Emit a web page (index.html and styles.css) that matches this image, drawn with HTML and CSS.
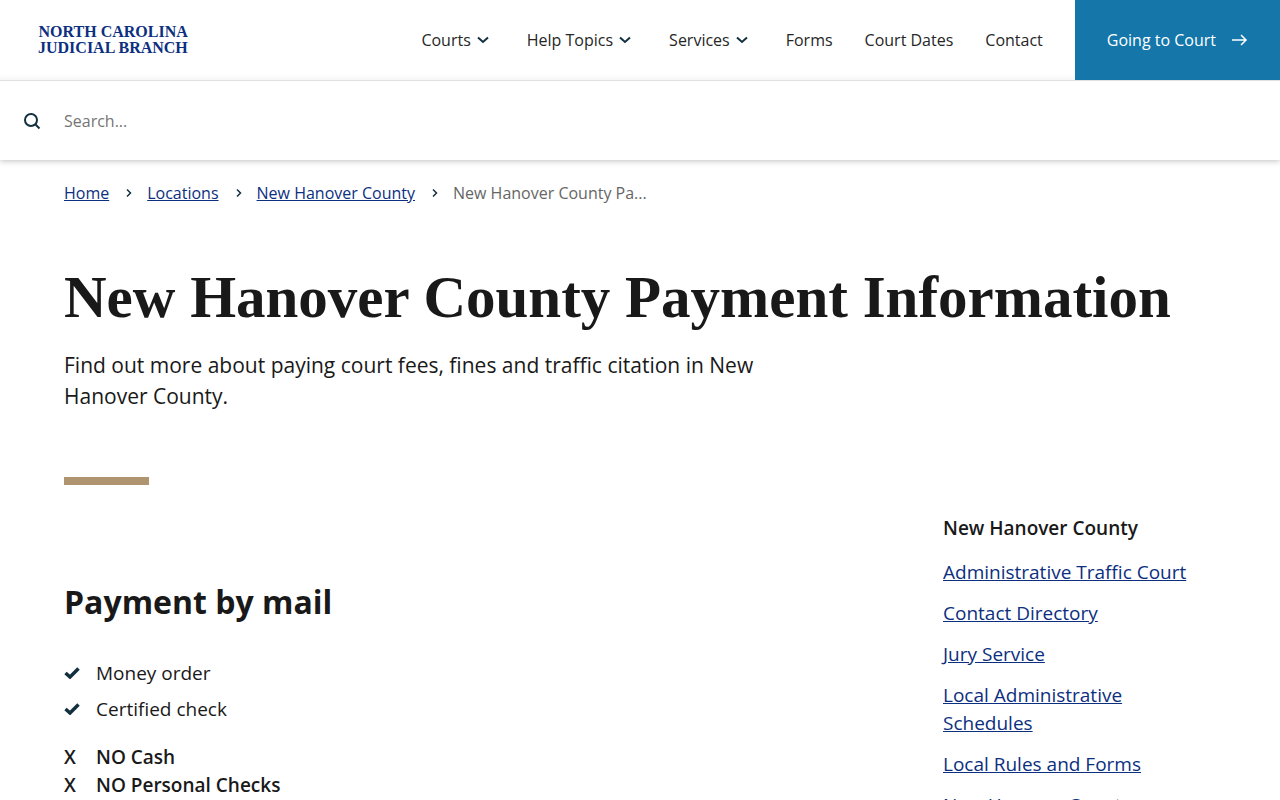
FILE: index.html
```html
<!DOCTYPE html>
<html lang="en">
<head>
<meta charset="utf-8">
<meta name="viewport" content="width=device-width, initial-scale=1">
<title>New Hanover County Payment Information</title>
<link rel="stylesheet" href="styles.css">
</head>
<body>
<header class="site-header">
  <div class="topbar">
    <a class="logo" href="#">NORTH CAROLINA<br>JUDICIAL BRANCH</a>
    <nav class="main-nav" aria-label="Main">
      <button class="nav-item" type="button">Courts <svg class="chevron" viewBox="0 0 12 8" aria-hidden="true"><path d="M1 1.500 6 6l5-4.500"/></svg></button>
      <button class="nav-item" type="button">Help Topics <svg class="chevron" viewBox="0 0 12 8" aria-hidden="true"><path d="M1 1.500 6 6l5-4.500"/></svg></button>
      <button class="nav-item" type="button">Services <svg class="chevron" viewBox="0 0 12 8" aria-hidden="true"><path d="M1 1.500 6 6l5-4.500"/></svg></button>
      <a class="nav-item" href="#">Forms</a>
      <a class="nav-item" href="#">Court Dates</a>
      <a class="nav-item" href="#">Contact</a>
    </nav>
    <a class="cta" href="#">Going to Court <svg class="arrow" viewBox="0 0 16 12" aria-hidden="true"><path d="M0 6h14M9 1l5 5-5 5"/></svg></a>
  </div>
  <form class="search" role="search">
    <button class="search-button" type="button" aria-label="Search"><svg class="search-icon" viewBox="0 0 16 16" aria-hidden="true"><circle cx="7" cy="7" r="6"/><path d="m11.500 11.500 4 4"/></svg></button>
    <input class="search-input" type="text" placeholder="Search..." aria-label="Search">
  </form>
</header>
<main class="page">
  <nav class="breadcrumbs" aria-label="Breadcrumb">
    <a href="#">Home</a>
    <svg class="crumb-sep" viewBox="0 0 6 8" aria-hidden="true"><path d="m2 .5 3.500 3.500L2 7.500"/></svg>
    <a href="#">Locations</a>
    <svg class="crumb-sep" viewBox="0 0 6 8" aria-hidden="true"><path d="m2 .5 3.500 3.500L2 7.500"/></svg>
    <a href="#">New Hanover County</a>
    <svg class="crumb-sep" viewBox="0 0 6 8" aria-hidden="true"><path d="m2 .5 3.500 3.500L2 7.500"/></svg>
    <span class="current">New Hanover County Pa...</span>
  </nav>
  <h1 class="title">New Hanover County Payment Information</h1>
  <p class="lead">Find out more about paying court fees, fines and traffic citation in New Hanover County.</p>
  <div class="rule"></div>
  <div class="columns">
    <section class="content">
      <h2 class="section-title">Payment by mail</h2>
      <ul class="accepted">
        <li><svg class="check" viewBox="0 0 16 12" aria-hidden="true"><path d="m1.500 6 4.500 4 8.500-8.500"/></svg>Money order</li>
        <li><svg class="check" viewBox="0 0 16 12" aria-hidden="true"><path d="m1.500 6 4.500 4 8.500-8.500"/></svg>Certified check</li>
      </ul>
      <ul class="refused">
        <li><span class="cross">X</span>NO Cash</li>
        <li><span class="cross">X</span>NO Personal Checks</li>
      </ul>
    </section>
    <aside class="sidebar">
      <h2 class="sidebar-title">New Hanover County</h2>
      <ul class="sidebar-links">
        <li><a href="#">Administrative Traffic Court</a></li>
        <li><a href="#">Contact Directory</a></li>
        <li><a href="#">Jury Service</a></li>
        <li><a href="#">Local Administrative Schedules</a></li>
        <li><a href="#">Local Rules and Forms</a></li>
        <li><a href="#">New Hanover County</a></li>
      </ul>
    </aside>
  </div>
</main>
</body>
</html>
```
FILE: styles.css
```css
* { box-sizing: border-box; }
body {
  margin: 0;
  background: #fff;
  color: #191919;
  font: 16px/24px "Open Sans", sans-serif;
}
h1, h2, p, ul { margin: 0; padding: 0; }
ul { list-style: none; }
svg { fill: none; stroke: #12303f; flex: none; }
button { border: 0; padding: 0; background: none; color: inherit; font: inherit; cursor: pointer; }

.site-header { box-shadow: 0 1px 6px rgba(0, 0, 0, 0.25); }
.topbar {
  display: flex;
  align-items: center;
  min-height: 80px;
  background: linear-gradient(to top, #f6f6f6, #fff 6px);
}
.logo {
  margin: 0 auto 0 38px;
  color: #0c2f80;
  font: bold 16px/16px "Liberation Serif", serif;
  text-align: right;
  text-decoration: none;
}
.main-nav { display: flex; gap: 32px; margin-right: 32px; }
.nav-item {
  display: flex;
  align-items: center;
  gap: 6px;
  color: #262626;
  text-decoration: none;
  white-space: nowrap;
}
.chevron { width: 12px; height: 8px; margin-right: 6px; stroke-width: 2; }
.cta {
  display: flex;
  align-items: center;
  align-self: stretch;
  gap: 16px;
  padding: 0 32px;
  background: #1476a9;
  color: #fff;
  font-weight: 500;
  text-decoration: none;
  white-space: nowrap;
}
.arrow { width: 16px; height: 12px; stroke: #fff; stroke-width: 1.5; }

.search {
  display: flex;
  align-items: center;
  gap: 24px;
  height: 80px;
  padding: 0 24px;
  border-top: 1px solid #e0e0e0;
  background: #fff;
}
.search-button { display: flex; }
.search-icon { width: 16px; height: 16px; stroke-width: 2; overflow: visible; }
.search-input {
  flex: 1;
  border: 0;
  padding: 0;
  outline: 0;
  background: none;
  color: inherit;
  font: inherit;
}
.search-input::placeholder { color: #757575; opacity: 1; }

.page { padding: 21px 64px 0; }
a { color: #0c2f80; }
.breadcrumbs { display: flex; align-items: center; gap: 16px; }
.crumb-sep { width: 6px; height: 8px; stroke-width: 1.5; overflow: visible; }
.current { color: #666; }
.title {
  margin-top: 60px;
  font: bold 59px/64px "Liberation Serif", serif;
}
.lead {
  max-width: 720px;
  margin-top: 21px;
  font-size: 21px;
  line-height: 31px;
}
.rule { width: 85px; height: 8px; margin-top: 65px; background: #b0946f; }

.columns {
  display: flex;
  justify-content: space-between;
  font-size: 19px;
  line-height: 28px;
}
.content { padding-top: 97px; }
.section-title { font-size: 32px; line-height: 40px; }
.accepted { display: grid; gap: 8px; margin-top: 37px; }
.accepted li, .refused li { display: flex; align-items: center; }
.check { width: 16px; height: 12px; margin-right: 16px; stroke-width: 3.5; }
.refused { margin-top: 20px; font-weight: 600; }
.cross { width: 32px; }
.sidebar { width: 273px; padding-top: 29px; }
.sidebar-title { font-size: 19px; font-weight: 600; }
.sidebar-links { display: grid; gap: 13px; margin-top: 16px; padding-right: 24px; }
```
